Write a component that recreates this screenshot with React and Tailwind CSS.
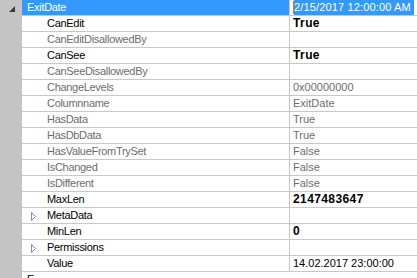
import React from 'react';

const rows = [
  { name: 'CanEdit', value: 'True', editable: true, bold: true },
  { name: 'CanEditDisallowedBy', value: '' },
  { name: 'CanSee', value: 'True', editable: true, bold: true },
  { name: 'CanSeeDisallowedBy', value: '' },
  { name: 'ChangeLevels', value: '0x00000000' },
  { name: 'Columnname', value: 'ExitDate' },
  { name: 'HasData', value: 'True' },
  { name: 'HasDbData', value: 'True' },
  { name: 'HasValueFromTrySet', value: 'False' },
  { name: 'IsChanged', value: 'False' },
  { name: 'IsDifferent', value: 'False' },
  { name: 'MaxLen', value: '2147483647', editable: true, bold: true },
  { name: 'MetaData', value: '', editable: true, expandable: true },
  { name: 'MinLen', value: '0', editable: true, bold: true },
  { name: 'Permissions', value: '', editable: true, expandable: true },
  { name: 'Value', value: '14.02.2017 23:00:00', editable: true, valueBlack: true },
];

const CollapsedArrow = () => (
  <svg width="6" height="9" viewBox="0 0 6 9" className="absolute left-[9px] top-[4px]">
    <polygon points="0.5,0.5 4.5,4.5 0.5,8.5" fill="none" stroke="#8a8a8a" strokeWidth="1" />
  </svg>
);

const PropRow = ({ row }) => {
  const nameColor = row.editable ? 'text-black' : 'text-[#6d6d6d]';
  let valueClass = 'text-[#6d6d6d]';
  if (row.bold) valueClass = 'text-black font-bold text-[12px] tracking-[0.4px]';
  if (row.valueBlack) valueClass = 'text-black';
  return (
    <div className="flex h-4">
      <div className="w-[22px] shrink-0 bg-[#c4c4c4]" />
      <div className="flex flex-1 border-b border-[#c8c8c8] bg-white">
        <div className={`relative w-[268px] shrink-0 border-r border-[#c8c8c8] pl-[25px] leading-[15px] tracking-[-0.3px] ${nameColor}`}>
          {row.expandable && <CollapsedArrow />}
          {row.name}
        </div>
        <div className={`flex-1 pl-[3px] leading-[15px] whitespace-nowrap ${valueClass}`}>{row.value}</div>
      </div>
    </div>
  );
};

export default function App() {
  return (
    <div
      className="w-[417px] h-[278px] overflow-hidden bg-white text-[11px]"
      style={{ fontFamily: '"Liberation Sans", Arial, sans-serif' }}
    >
      <div className="flex h-4">
        <div className="relative w-[22px] shrink-0 bg-[#c4c4c4]">
          <svg width="6" height="6" viewBox="0 0 6 6" className="absolute left-[9px] top-[6px]">
            <polygon points="6,0 6,6 0,6" fill="#3c3c3c" />
          </svg>
        </div>
        <div className="flex flex-1 border-b border-[#c8c8c8] bg-white">
          <div className="w-[268px] shrink-0 border-r border-[#c8c8c8] bg-[#3399ff] pl-[5px] leading-[15px] tracking-[-0.3px] text-white">
            ExitDate
          </div>
          <div className="flex flex-1 items-stretch pl-[3px]">
            <div className="w-px bg-[#e07b00] my-[1px]" />
            <div className="bg-[#3399ff] pr-[3px] leading-[15px] tracking-[0.15px] text-white whitespace-nowrap">
              2/15/2017 12:00:00 AM
            </div>
          </div>
        </div>
      </div>
      {rows.map((row) => (
        <PropRow key={row.name} row={row} />
      ))}
      <div className="flex h-4">
        <div className="w-[22px] shrink-0 bg-[#c4c4c4]" />
        <div className="flex-1 bg-white pl-[5px] leading-[15px] text-black">E</div>
      </div>
    </div>
  );
}
